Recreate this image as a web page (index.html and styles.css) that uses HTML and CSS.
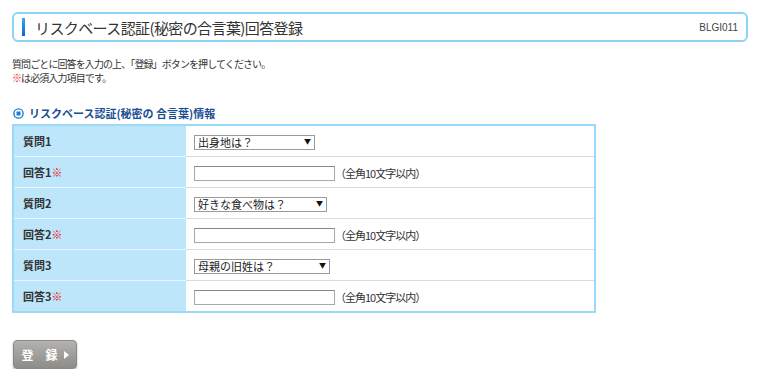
FILE: index.html
```html
<!DOCTYPE html>
<html lang="ja">
<head>
    <meta charset="UTF-8">
    <meta name="viewport" content="width=device-width, initial-scale=1.0">
    <title>リスクベース認証(秘密の合言葉)回答登録</title>
    <link rel="stylesheet" href="styles.css">
</head>
<body>
    <div class="page">
        <div class="title-box">
            <span class="title-bar"></span>
            <h1>リスクベース認証(秘密の合言葉)回答登録</h1>
            <span class="screen-id">BLGI011</span>
        </div>

        <div class="lead">
            <p>質問ごとに回答を入力の上、「登録」ボタンを押してください。</p>
            <p><span class="req">※</span>は必須入力項目です。</p>
        </div>

        <h2 class="section-title">
            <svg width="11" height="11" viewBox="0 0 11 11">
                <circle cx="5.5" cy="5.5" r="4.6" fill="#fff" stroke="#1e7fd0" stroke-width="1.4"/>
                <rect x="3.5" y="3.5" width="4" height="4" fill="#1e7fd0"/>
            </svg>
            リスクベース認証(秘密の 合言葉)情報
        </h2>

        <table class="form-table">
            <tr>
                <th>質問1</th>
                <td>
                    <span class="select-wrap w1">
                        <select><option>出身地は？</option></select>
                    </span>
                </td>
            </tr>
            <tr>
                <th>回答1<span class="req">※</span></th>
                <td><input type="text" class="answer"><span class="note">（全角10文字以内）</span></td>
            </tr>
            <tr>
                <th>質問2</th>
                <td>
                    <span class="select-wrap w2">
                        <select><option>好きな食べ物は？</option></select>
                    </span>
                </td>
            </tr>
            <tr>
                <th>回答2<span class="req">※</span></th>
                <td><input type="text" class="answer"><span class="note">（全角10文字以内）</span></td>
            </tr>
            <tr>
                <th>質問3</th>
                <td>
                    <span class="select-wrap w3">
                        <select><option>母親の旧姓は？</option></select>
                    </span>
                </td>
            </tr>
            <tr>
                <th>回答3<span class="req">※</span></th>
                <td><input type="text" class="answer"><span class="note">（全角10文字以内）</span></td>
            </tr>
        </table>

        <button class="submit-btn">登　録<span class="arrow"></span></button>
    </div>
</body>
</html>
```

FILE: styles.css
```css
body {
    margin: 0;
    font-family: "Noto Sans CJK JP", "Noto Sans", sans-serif;
    color: #333;
    background-color: #fff;
}

.page {
    padding: 12px 12px 0 12px;
}

.title-box {
    display: flex;
    align-items: center;
    height: 26px;
    border: 2px solid #8ed3f4;
    border-radius: 6px;
    padding: 0 8px 0 8px;
}

.title-bar {
    width: 3px;
    height: 18px;
    margin-right: 10px;
    background: linear-gradient(#37a8f2, #0a66d6);
}

.title-box h1 {
    flex: 1;
    margin: 0;
    font-size: 15px;
    font-weight: normal;
    letter-spacing: -0.6px;
    color: #333;
}

.screen-id {
    font-family: "Liberation Sans", sans-serif;
    font-size: 10px;
    color: #444;
}

.lead {
    margin-top: 15px;
    font-size: 10px;
    letter-spacing: -0.9px;
    line-height: 14px;
    color: #333;
}

.lead p {
    margin: 0;
}

.req {
    color: #f01010;
    font-weight: bold;
}

.section-title {
    display: flex;
    align-items: center;
    gap: 5px;
    margin: 20px 0 3px 1px;
    font-size: 11px;
    font-weight: bold;
    color: #1a4f94;
    line-height: 16px;
}

.form-table {
    width: 584px;
    border-collapse: collapse;
    border: 2px solid #9ad9f7;
}

.form-table th,
.form-table td {
    height: 30px;
    padding: 0;
    font-size: 11px;
}

.form-table th {
    width: 163px;
    padding-left: 9px;
    text-align: left;
    font-weight: bold;
    color: #333;
    background-color: #bde6fb;
    border-top: 1px solid #e4f5fe;
}

.form-table td {
    padding-left: 8px;
    background-color: #fff;
    border-top: 1px solid #dcdcdc;
}

.form-table tr:first-child th,
.form-table tr:first-child td {
    border-top: none;
}

.select-wrap {
    position: relative;
    display: inline-block;
    vertical-align: middle;
}

.select-wrap select {
    appearance: none;
    -webkit-appearance: none;
    height: 15px;
    padding: 0 0 0 3px;
    border: 1px solid #9a9a9a;
    border-radius: 0;
    background-color: #fff;
    font-family: "Noto Sans CJK JP", sans-serif;
    font-size: 11px;
    line-height: 13px;
    color: #222;
}

.select-wrap::after {
    content: "▼";
    position: absolute;
    right: 4px;
    top: 2px;
    font-size: 7px;
    line-height: 11px;
    color: #111;
    pointer-events: none;
}

.w1 select { width: 121px; }
.w2 select { width: 133px; }
.w3 select { width: 136px; }

.answer {
    width: 141px;
    height: 15px;
    box-sizing: border-box;
    padding: 0 2px;
    border: 1px solid #a8a8a8;
    border-top-color: #888;
    vertical-align: middle;
}

.note {
    margin-left: 0;
    font-size: 11px;
    letter-spacing: -1px;
    vertical-align: middle;
    color: #333;
}

.submit-btn {
    display: flex;
    align-items: center;
    justify-content: center;
    gap: 6px;
    width: 64px;
    height: 29px;
    margin: 27px 0 0 1px;
    padding: 0;
    border: 1px solid #8b8985;
    border-radius: 4px;
    background: linear-gradient(#b4b2ae, #8e8c88);
    box-shadow: 0 1px 2px rgba(0, 0, 0, 0.35);
    color: #fff;
    font-family: "Noto Sans CJK JP", sans-serif;
    font-size: 12px;
    font-weight: bold;
    cursor: pointer;
}

.arrow {
    width: 0;
    height: 0;
    border-top: 4px solid transparent;
    border-bottom: 4px solid transparent;
    border-left: 5px solid #fff;
}
```
